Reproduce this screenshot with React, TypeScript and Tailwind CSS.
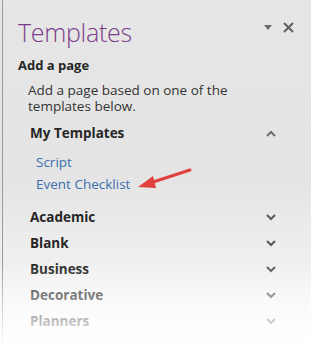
const categories = ['Academic', 'Blank', 'Business', 'Decorative', 'Planners']

const Chevron = ({ up, className }: { up?: boolean; className?: string }) => (
  <svg width="10" height="7" viewBox="0 0 10 7" className={className}>
    <path
      d={up ? 'M1 6 L5 2 L9 6' : 'M1 1 L5 5 L9 1'}
      fill="none"
      stroke="currentColor"
      strokeWidth="2"
    />
  </svg>
)

const App = () => {
  return (
    <div
      className="relative w-[311px] h-[347px] overflow-hidden bg-gradient-to-b from-[#e6e6e6] via-[#e4e4e4] to-[#fbfbfb] pl-[2px]"
      style={{ fontFamily: '"Open Sans", "Noto Sans", sans-serif' }}
    >
      <div className="h-full border-l border-[#9a9a9a] pl-[15px] pr-[16px]">
        {/* header */}
        <div className="flex items-center justify-between pt-[16px]">
          <h1 className="text-[25px] leading-[32px] font-light text-[#7b3d8a] tracking-[-0.3px]">
            Templates
          </h1>
          <div className="flex items-center gap-[11px] -mt-[10px] pr-[1px]">
            <svg width="8" height="5" viewBox="0 0 8 5">
              <path d="M0 0 L8 0 L4 5 Z" fill="#6b6b6b" />
            </svg>
            <svg width="11" height="11" viewBox="0 0 11 11">
              <path d="M1 1 L10 10 M10 1 L1 10" stroke="#5e5e5e" strokeWidth="2" />
            </svg>
          </div>
        </div>

        <div className="mt-[9px] text-[13px] leading-[16px] font-bold text-[#262626]">
          Add a page
        </div>
        <p className="mt-[9px] pl-[10px] text-[13.5px] leading-[16px] text-[#333]">
          Add a page based on one of the
          <br />
          templates below.
        </p>

        <div className="mt-[9px] pl-[12px]">
          <div className="flex items-center justify-between h-[20px]">
            <span className="text-[13.5px] font-bold text-[#262626]">My Templates</span>
            <Chevron up className="text-[#6e6e6e] mr-[19px]" />
          </div>
          <div className="pl-[6px] mt-[8px] flex flex-col text-[13.5px] leading-[22px] text-[#3a6fb0]">
            <span>Script</span>
            <div className="flex items-center">
              <span>Event Checklist</span>
              <svg width="56" height="26" viewBox="0 0 56 26" className="ml-[6px] -mt-[6px]">
                <path d="M54 2 L14 15" stroke="#e0403e" strokeWidth="3" strokeLinecap="round" />
                <path d="M2 19 L17 8 L20 20 Z" fill="#e0403e" />
              </svg>
            </div>
          </div>

          <div className="mt-[9px] flex flex-col">
            {categories.map((name) => (
              <div key={name} className="flex items-center justify-between h-[26px]">
                <span className="text-[13.5px] font-bold text-[#262626]">{name}</span>
                <Chevron className="text-[#5a5a5a] mr-[19px]" />
              </div>
            ))}
          </div>
        </div>
      </div>
      {/* fade at the bottom */}
      <div className="pointer-events-none absolute inset-x-0 bottom-0 h-[84px] bg-gradient-to-b from-transparent via-[#ffffff80] to-white" />
    </div>
  )
}

export default App
